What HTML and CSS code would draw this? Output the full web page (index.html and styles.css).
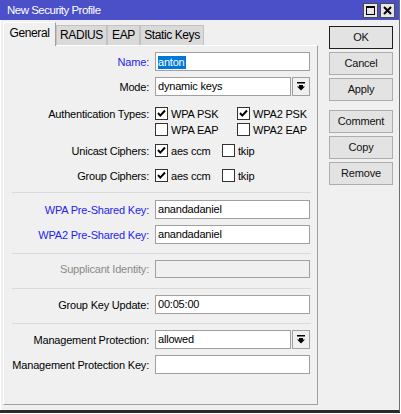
FILE: index.html
```html
<!DOCTYPE html>
<html>
<head>
<meta charset="utf-8">
<link rel="stylesheet" href="styles.css">
</head>
<body>
<div class="window">
  <div class="titlebar">
    <span class="title">New Security Profile</span>
    <div class="tb-buttons">
      <span class="tb-btn"><svg width="11" height="11" viewBox="0 0 11 11"><rect x="1.5" y="1.5" width="8" height="8" fill="none" stroke="#000" stroke-width="1"/><rect x="1" y="1" width="9" height="2" fill="#000"/></svg></span>
      <span class="tb-btn"><svg width="11" height="11" viewBox="0 0 11 11"><path d="M2 2 L9 9 M9 2 L2 9" stroke="#000" stroke-width="2" fill="none"/></svg></span>
    </div>
  </div>
  <div class="main">
    <div class="left">
      <div class="tabs">
        <div class="tab active w-general">General</div>
        <div class="tab w-radius">RADIUS</div>
        <div class="tab w-eap">EAP</div>
        <div class="tab w-static">Static Keys</div>
      </div>
      <div class="panel">
        <div class="row">
          <span class="lbl blue">Name:</span>
          <span class="field"><span class="selected">anton</span></span>
        </div>
        <div class="row mt6">
          <span class="lbl">Mode:</span>
          <span class="field sel">dynamic keys</span>
          <span class="ddbtn"><svg width="8" height="9" viewBox="0 0 8 9"><rect x="0" y="0" width="8" height="1.5" fill="#000"/><polygon points="2,3 6,3 6,4.5 8,4.5 4,8.5 0,4.5 2,4.5" fill="#000"/></svg></span>
        </div>
        <div class="row cb mt11">
          <span class="lbl">Authentication Types:</span>
          <span class="opt w82"><span class="box"><svg width="11" height="11" viewBox="0 0 11 11"><polyline points="2,5 4.3,7.6 9,2.5" fill="none" stroke="#000" stroke-width="2"/></svg></span>WPA PSK</span>
          <span class="opt"><span class="box"><svg width="11" height="11" viewBox="0 0 11 11"><polyline points="2,5 4.3,7.6 9,2.5" fill="none" stroke="#000" stroke-width="2"/></svg></span>WPA2 PSK</span>
        </div>
        <div class="row cb mt3">
          <span class="lbl"></span>
          <span class="opt w82"><span class="box"></span>WPA EAP</span>
          <span class="opt"><span class="box"></span>WPA2 EAP</span>
        </div>
        <div class="row cb mt8">
          <span class="lbl">Unicast Ciphers:</span>
          <span class="opt w67"><span class="box"><svg width="11" height="11" viewBox="0 0 11 11"><polyline points="2,5 4.3,7.6 9,2.5" fill="none" stroke="#000" stroke-width="2"/></svg></span>aes ccm</span>
          <span class="opt"><span class="box"></span>tkip</span>
        </div>
        <div class="row cb mt12">
          <span class="lbl">Group Ciphers:</span>
          <span class="opt w67"><span class="box"><svg width="11" height="11" viewBox="0 0 11 11"><polyline points="2,5 4.3,7.6 9,2.5" fill="none" stroke="#000" stroke-width="2"/></svg></span>aes ccm</span>
          <span class="opt"><span class="box"></span>tkip</span>
        </div>
        <div class="sep mt10"></div>
        <div class="row mt7">
          <span class="lbl blue">WPA Pre-Shared Key:</span>
          <span class="field">anandadaniel</span>
        </div>
        <div class="row mt6">
          <span class="lbl blue">WPA2 Pre-Shared Key:</span>
          <span class="field">anandadaniel</span>
        </div>
        <div class="sep mt9"></div>
        <div class="row short mt6">
          <span class="lbl gray">Supplicant Identity:</span>
          <span class="field disabled"></span>
        </div>
        <div class="sep mt10"></div>
        <div class="row mt6">
          <span class="lbl">Group Key Update:</span>
          <span class="field">00:05:00</span>
        </div>
        <div class="sep mt9"></div>
        <div class="row mt6">
          <span class="lbl">Management Protection:</span>
          <span class="field sel">allowed</span>
          <span class="ddbtn"><svg width="8" height="9" viewBox="0 0 8 9"><rect x="0" y="0" width="8" height="1.5" fill="#000"/><polygon points="2,3 6,3 6,4.5 8,4.5 4,8.5 0,4.5 2,4.5" fill="#000"/></svg></span>
        </div>
        <div class="row mt6">
          <span class="lbl">Management Protection Key:</span>
          <span class="field"></span>
        </div>
      </div>
    </div>
    <div class="buttons">
      <div class="btn default">OK</div>
      <div class="btn mt3">Cancel</div>
      <div class="btn mt3">Apply</div>
      <div class="btn mt9">Comment</div>
      <div class="btn mt3">Copy</div>
      <div class="btn mt3">Remove</div>
    </div>
  </div>
</div>
</body>
</html>
```

FILE: styles.css
```css
* { box-sizing: border-box; }
html, body { margin: 0; padding: 0; background: #ffffff; }
body {
  font-family: "Liberation Sans", Arial, sans-serif;
  font-size: 11px;
  letter-spacing: -0.2px;
  color: #000;
}
.window {
  width: 400px;
  height: 413px;
  background: #f0f0f0;
  border-right: 1px solid #6e6e6e;
  border-bottom: 3px solid #2b2b2b;
  display: flex;
  flex-direction: column;
}
.titlebar {
  height: 20px;
  flex: none;
  background: #4b4fc8;
  display: flex;
  align-items: center;
  justify-content: space-between;
  padding: 0 4px 0 7px;
}
.title {
  color: #fff;
  font-size: 11.5px;
  letter-spacing: -0.5px;
}
.tb-buttons { display: flex; gap: 2px; }
.tb-btn {
  width: 15px;
  height: 15px;
  background: #e6e6e6;
  border: 1px solid #4a4a4a;
  display: flex;
  align-items: center;
  justify-content: center;
}
.main {
  display: flex;
  flex: 1;
  border-left: 1px solid #fff;
  padding-left: 2px;
}
.left {
  width: 315px;
  margin-top: 2px;
  display: flex;
  flex-direction: column;
}
.tabs {
  display: flex;
  align-items: flex-end;
  height: 23px;
}
.tab {
  height: 20px;
  background: #dadada;
  border: 1px solid #c2c2c2;
  border-bottom: none;
  text-align: center;
  line-height: 18px;
  font-size: 12px;
  letter-spacing: -0.4px;
}
.tab.active {
  height: 24px;
  margin-bottom: -1px;
  position: relative;
  z-index: 1;
  background: #f0f0f0;
  border-left: 1px solid #fff;
  border-top: 1px solid #fff;
  border-right: 1px solid #a0a0a0;
  line-height: 21px;
}
.w-general { width: 53px; }
.w-radius { width: 51px; }
.w-eap { width: 33px; }
.w-static { width: 64px; }
.panel {
  height: 360px;
  border: 1px solid #a0a0a0;
  border-left-color: #fff;
  border-top-color: #fff;
  padding-top: 6px;
  display: flex;
  flex-direction: column;
}
.row {
  display: flex;
  align-items: center;
  height: 19px;
  flex: none;
}
.row.cb { height: 13px; }
.row.short { height: 18px; }
.lbl {
  width: 145px;
  margin-right: 6px;
  text-align: right;
  white-space: nowrap;
}
.blue { color: #2424ee; }
.gray { color: #8a8a8a; }
.field {
  width: 155px;
  height: 19px;
  border: 1px solid #a0a0a0;
  background: #fff;
  padding-left: 2px;
  line-height: 17px;
  white-space: nowrap;
}
.row.short .field { height: 18px; }
.field.disabled { background: #f0f0f0; }
.field.sel { width: 136px; }
.selected {
  display: inline-block;
  background: #0078d7;
  color: #fff;
  line-height: 13px;
  vertical-align: middle;
  padding-right: 1px;
}
.ddbtn {
  width: 18px;
  height: 19px;
  margin-left: 1px;
  border: 1px solid #a0a0a0;
  background: #f0f0f0;
  display: flex;
  align-items: center;
  justify-content: center;
}
.opt {
  display: flex;
  align-items: center;
  white-space: nowrap;
}
.w82 { width: 82px; }
.w67 { width: 67px; }
.box {
  width: 13px;
  height: 13px;
  border: 1px solid #333;
  background: #fff;
  margin-right: 3px;
  display: flex;
  align-items: center;
  justify-content: center;
  flex: none;
}
.sep {
  height: 1px;
  flex: none;
  background: #dadada;
  margin-left: 8px;
  margin-right: 6px;
}
.buttons {
  margin-left: 11px;
  margin-top: 6px;
  display: flex;
  flex-direction: column;
}
.btn {
  width: 64px;
  height: 23px;
  background: #e3e3e3;
  border: 1px solid #adadad;
  text-align: center;
  line-height: 21px;
  color: #111;
}
.btn.default { border-color: #1e1e1e; }
.mt3 { margin-top: 3px; }
.mt6 { margin-top: 6px; }
.mt7 { margin-top: 7px; }
.mt8 { margin-top: 8px; }
.mt9 { margin-top: 9px; }
.mt10 { margin-top: 10px; }
.mt11 { margin-top: 11px; }
.mt12 { margin-top: 12px; }
```
